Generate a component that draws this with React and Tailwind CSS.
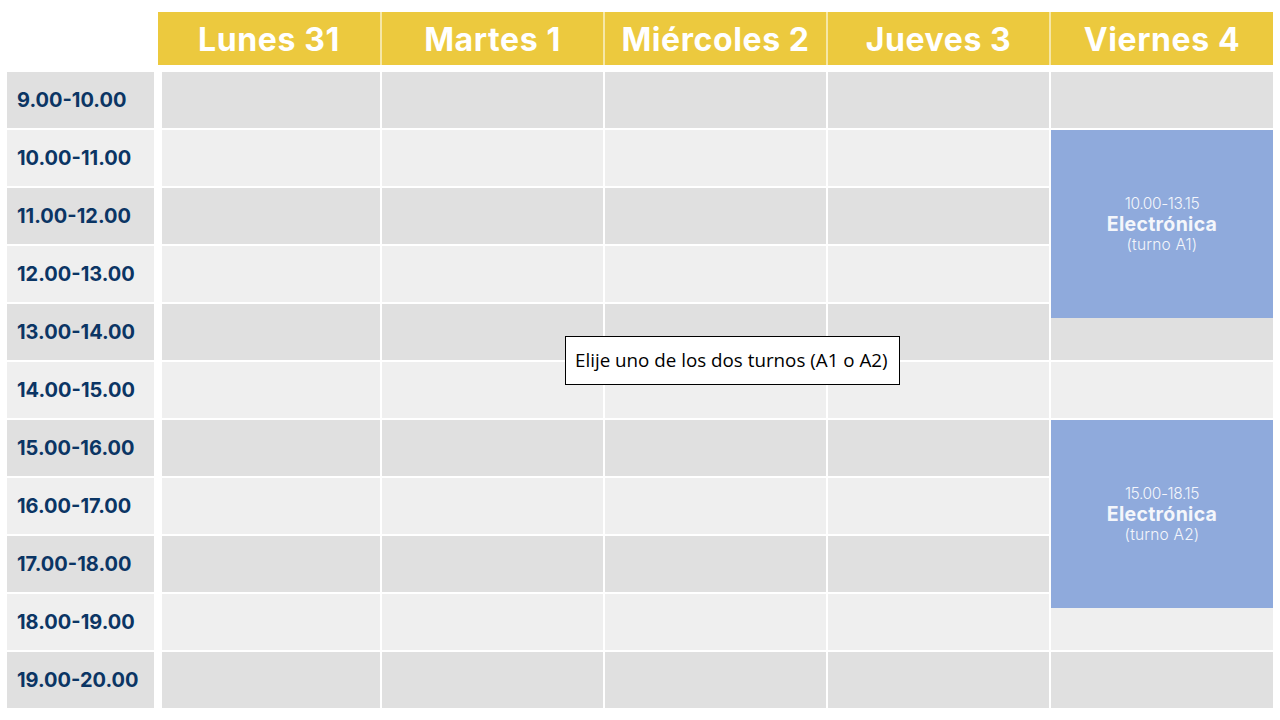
import React from "react";

const days = ["Lunes 31", "Martes 1", "Miércoles 2", "Jueves 3", "Viernes 4"];
const hours = [
  "9.00-10.00",
  "10.00-11.00",
  "11.00-12.00",
  "12.00-13.00",
  "13.00-14.00",
  "14.00-15.00",
  "15.00-16.00",
  "16.00-17.00",
  "17.00-18.00",
  "18.00-19.00",
  "19.00-20.00",
];

// pixel height of one hour row incl. the 2px white gap
const ROW = 58;

const blocks = [
  { time: "10.00-13.15", label: "Electrónica", turno: "(turno A1)", top: 1 * ROW, height: 188 },
  { time: "15.00-18.15", label: "Electrónica", turno: "(turno A2)", top: 6 * ROW, height: 188 },
];

function Block({ b }) {
  return (
    <div
      className="absolute right-0 w-[222px] bg-[#8faadc] flex flex-col items-center justify-center text-[#f4f6fb]"
      style={{ top: b.top, height: b.height }}
    >
      <div className="text-[15.5px] font-light leading-[20px] tracking-[-0.4px]">{b.time}</div>
      <div className="text-[19.5px] font-bold leading-[21px] tracking-[0.3px]">{b.label}</div>
      <div className="text-[15.5px] font-light leading-[20px] tracking-[0.2px]">{b.turno}</div>
    </div>
  );
}

export default function App() {
  return (
    <div className="w-[1280px] h-[720px] bg-white overflow-hidden font-['Inter',sans-serif]">
      {/* day header */}
      <div className="mt-[12px] ml-[158px] w-[1115px] h-[53px] grid grid-cols-[222px_221px_221px_221px_222px] gap-[2px] bg-[#f6e7a6]">
        {days.map(d => (
          <div key={d} className="bg-[#ecc93e] flex items-center justify-center text-white text-[32px] font-bold tracking-[0.6px] pt-[2px]">
            {d}
          </div>
        ))}
      </div>

      <div className="mt-[7px] flex">
        {/* hour labels */}
        <div className="ml-[7px] w-[147px] flex flex-col gap-[2px]">
          {hours.map((h, i) => (
            <div
              key={h}
              className={
                "h-[56px] flex items-center pl-[10px] text-[#0b3564] text-[20px] font-bold " +
                (i % 2 === 0 ? "bg-[#e0e0e0]" : "bg-[#efefef]")
              }
            >
              {h}
            </div>
          ))}
        </div>

        {/* schedule grid */}
        <div className="relative ml-[8px] w-[1111px]">
          <div className="flex flex-col gap-[2px]">
            {hours.map((h, i) => (
              <div key={h} className="grid grid-cols-[218px_221px_221px_221px_222px] gap-[2px] h-[56px]">
                {days.map(d => (
                  <div key={d} className={i % 2 === 0 ? "bg-[#e0e0e0]" : "bg-[#efefef]"} />
                ))}
              </div>
            ))}
          </div>

          {blocks.map(b => (
            <Block key={b.turno} b={b} />
          ))}

          <div className="absolute left-[403px] top-[264px] w-[335px] h-[49px] bg-white border border-black flex items-center pl-[9px] font-['Open_Sans',sans-serif] text-[18.8px] text-black">
            Elije uno de los dos turnos (A1 o A2)
          </div>
        </div>
      </div>
    </div>
  );
}
